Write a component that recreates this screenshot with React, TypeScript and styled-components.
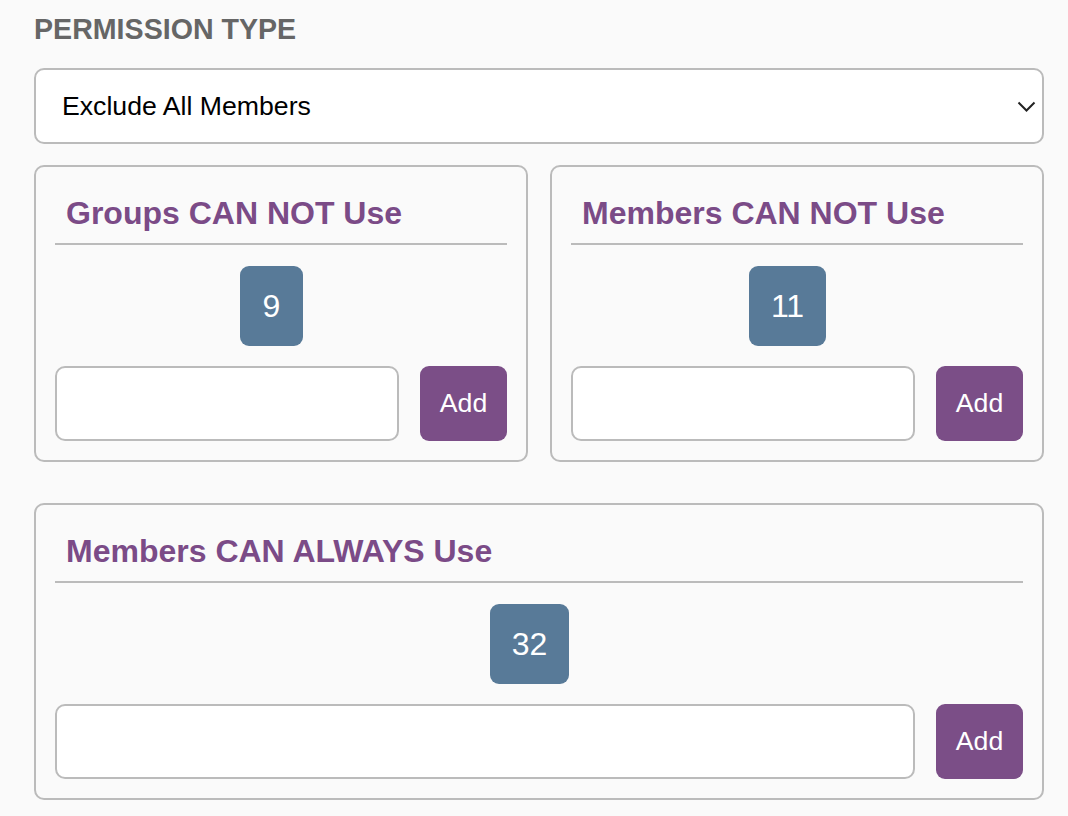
import React from "react";
import styled, { createGlobalStyle } from "styled-components";

const GlobalStyle = createGlobalStyle`
  html, body {
    margin: 0;
    padding: 0;
    background: #fafafa;
  }
  body {
    font-family: "Liberation Sans", Arial, Helvetica, sans-serif;
    color: #000;
  }
  * { box-sizing: border-box; }
`;

const Page = styled.div`
  display: flex;
  flex-direction: column;
  padding: 13px 24px 17px 34px;
`;

const SectionLabel = styled.h2`
  margin: 0;
  font-size: 28.6px;
  line-height: 32px;
  font-weight: 700;
  color: #666666;
`;

const SelectBox = styled.div`
  margin-top: 23px;
  height: 76px;
  border: 2px solid #bbbbbb;
  border-radius: 10px;
  background: #ffffff;
  display: flex;
  align-items: center;
  justify-content: space-between;
  padding: 0 6px 0 26px;
  font-size: 26.67px;
  color: #000;
`;

const CardGrid = styled.div`
  display: grid;
  grid-template-columns: repeat(2, minmax(0, 1fr));
  gap: 22px;
  margin-top: 21px;
`;

const Card = styled.section<{ $spaced?: boolean }>`
  display: flex;
  flex-direction: column;
  min-width: 0;
  border: 2px solid #bbbbbb;
  border-radius: 10px;
  padding: 29px 19px 19px;
  margin-top: ${(p) => (p.$spaced ? "41px" : "0")};
`;

const CardTitle = styled.h3`
  margin: 0;
  padding: 0 11px 12px;
  font-size: 32px;
  line-height: 35px;
  font-weight: 700;
  color: #7b4b87;
  border-bottom: 2px solid #bbbbbb;
`;

const BadgeRow = styled.div`
  display: flex;
  justify-content: center;
  padding-right: 19px;
  margin-top: 21px;
`;

const Badge = styled.span`
  display: flex;
  align-items: center;
  justify-content: center;
  height: 80px;
  min-width: 63px;
  padding: 0 22px;
  border-radius: 9px;
  background: #587a98;
  color: #ffffff;
  font-size: 32px;
`;

const AddRow = styled.div`
  display: flex;
  gap: 21px;
  margin-top: 20px;
`;

const TextInput = styled.input`
  flex: 1;
  min-width: 0;
  width: 100%;
  height: 75px;
  border: 2px solid #bbbbbb;
  border-radius: 10px;
  background: #ffffff;
  font-family: inherit;
  font-size: 26.67px;
  padding: 0 16px;
  outline: none;
`;

const AddButton = styled.button`
  flex: none;
  width: 87px;
  height: 75px;
  border: none;
  border-radius: 9px;
  background: #7b4e87;
  color: #ffffff;
  font-family: inherit;
  font-size: 26.67px;
  padding: 0;
  cursor: pointer;
`;

const Chevron = () => (
  <svg width="19" height="11" viewBox="0 0 19 11" aria-hidden="true">
    <polyline points="1.5,1.5 9.5,9.5 17.5,1.5" fill="none" stroke="#222" strokeWidth="2" />
  </svg>
);

type ListCard = { title: string; count: number };

const PermissionCard = ({ title, count, spaced }: ListCard & { spaced?: boolean }) => (
  <Card $spaced={spaced}>
    <CardTitle>{title}</CardTitle>
    <BadgeRow>
      <Badge>{count}</Badge>
    </BadgeRow>
    <AddRow>
      <TextInput type="text" />
      <AddButton type="button">Add</AddButton>
    </AddRow>
  </Card>
);

const topCards: ListCard[] = [
  { title: "Groups CAN NOT Use", count: 9 },
  { title: "Members CAN NOT Use", count: 11 },
];

export default function App() {
  return (
    <>
      <GlobalStyle />
      <Page>
        <SectionLabel>PERMISSION TYPE</SectionLabel>
        <SelectBox>
          <span>Exclude All Members</span>
          <Chevron />
        </SelectBox>
        <CardGrid>
          {topCards.map((c) => (
            <PermissionCard key={c.title} {...c} />
          ))}
        </CardGrid>
        <PermissionCard title="Members CAN ALWAYS Use" count={32} spaced />
      </Page>
    </>
  );
}
